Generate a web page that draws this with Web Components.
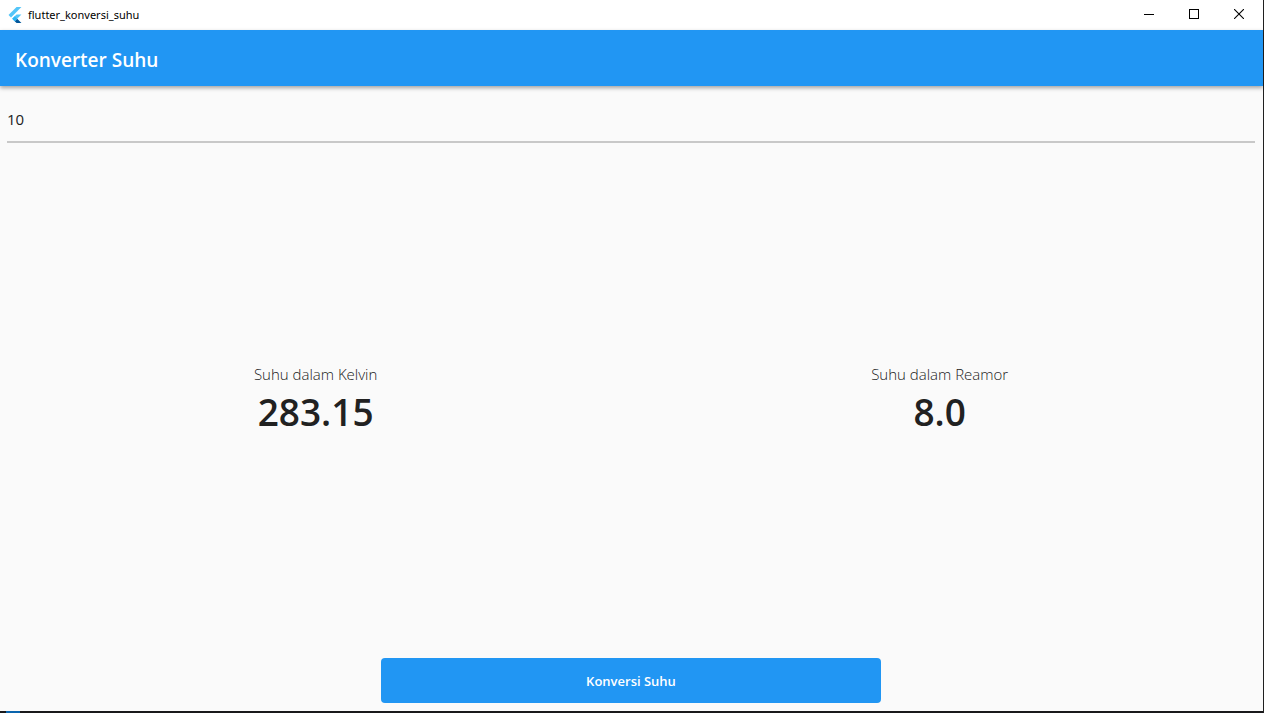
<!DOCTYPE html>
<html lang="id">
<head>
<meta charset="utf-8">
<meta name="viewport" content="width=device-width, initial-scale=1">
<title>flutter_konversi_suhu</title>
<style>
html, body { height: 100%; margin: 0; }
body { background: #202020; font-family: "Open Sans", "Noto Sans", sans-serif; color: #212121; }
</style>
</head>
<body>
<app-window>
  <title-bar slot="title">flutter_konversi_suhu</title-bar>
  <app-bar slot="bar">Konverter Suhu</app-bar>
  <temperature-converter></temperature-converter>
</app-window>

<template id="app-window">
  <style>
    :host { display: flex; flex-direction: column; box-sizing: border-box; min-height: 100vh; border-right: 1px solid #202020; background: #fafafa; }
    ::slotted(temperature-converter) { flex: 1; }
    .taskbar { display: flex; height: 2px; background: #19191b; }
    .start { width: 14px; margin-left: 6px; background: #0a64ad; }
  </style>
  <slot name="title"></slot>
  <slot name="bar"></slot>
  <slot></slot>
  <div class="taskbar"><span class="start"></span></div>
</template>

<template id="title-bar">
  <style>
    :host { display: flex; align-items: center; height: 30px; background: #fff; color: #000; font-size: 11px; line-height: 16px; }
    .logo { width: 16px; height: 16px; margin: 0 5px 0 7px; }
    .name { flex: 1; font-family: "Noto Sans", sans-serif; }
    button { display: grid; place-items: center; width: 45px; height: 28px; padding: 0; border: 0; background: none; }
    .controls { display: flex; height: 28px; padding-right: 2px; align-self: flex-start; }
  </style>
  <svg class="logo" viewBox="0 0 24 24" aria-hidden="true">
    <path fill="#54c5f8" d="M14.314 0 2.300 12 6 15.700 21.684 0z"/>
    <path fill="#54c5f8" d="M14.328 11.072 7.857 17.530l3.690 3.690L21.700 11.072z"/>
    <path fill="#01579b" d="M11.547 21.220 14.327 24H21.700l-6.460-6.468z"/>
    <path fill="#29b6f6" d="M7.857 17.530l3.690-3.690 3.693 3.692-3.693 3.688z"/>
  </svg>
  <span class="name"><slot></slot></span>
  <div class="controls">
    <button aria-label="Minimize"><svg width="10" height="10" shape-rendering="crispEdges"><path fill="#000" d="M0 5h10v1H0z"/></svg></button>
    <button aria-label="Maximize"><svg width="10" height="10" shape-rendering="crispEdges"><path fill="none" stroke="#000" d="M.5 .5h9v9h-9z"/></svg></button>
    <button aria-label="Close"><svg width="10" height="10"><path fill="none" stroke="#000" stroke-width="1.100" d="M0 0l10 10M10 0L0 10"/></svg></button>
  </div>
</template>

<template id="app-bar">
  <style>
    :host { display: flex; align-items: center; height: 56px; padding: 0 15px; background: #2196f3; color: #fff; box-shadow: 0 2px 4px rgba(0,0,0,.35); }
    h1 { margin: 4px 0 0; font-size: 19px; line-height: 26px; font-weight: 600; }
  </style>
  <h1><slot></slot></h1>
</template>

<template id="temperature-reading">
  <style>
    :host { display: flex; flex-direction: column; align-items: center; }
    .label { font-size: 15px; line-height: 22px; font-weight: 300; }
    output { font-size: 37px; line-height: 54px; font-weight: 600; }
  </style>
  <span class="label"><slot></slot></span>
  <output></output>
</template>

<template id="temperature-converter">
  <style>
    :host { display: flex; }
    form { display: flex; flex: 1; flex-direction: column; padding: 8px 8px 8px 7px; }
    input { box-sizing: border-box; width: 100%; height: 49px; padding: 2px 0 0; border: 0; border-bottom: 2px solid #c8c8c8; border-radius: 0; outline: 0; background: none; color: #212121; font: 15px/22px "Open Sans", "Noto Sans", sans-serif; }
    .readings { display: flex; flex: 1; align-items: center; justify-content: space-around; }
    button { align-self: center; width: 500px; max-width: 100%; height: 45px; border: 0; border-radius: 4px; background: #2196f3; color: #fff; font: 600 13px/20px "Open Sans", "Noto Sans", sans-serif; }
  </style>
  <form>
    <input type="text" inputmode="decimal" value="10" aria-label="Suhu dalam Celcius">
    <div class="readings">
      <temperature-reading id="kelvin" value="283.15">Suhu dalam Kelvin</temperature-reading>
      <temperature-reading id="reamor" value="8.0">Suhu dalam Reamor</temperature-reading>
    </div>
    <button type="submit">Konversi Suhu</button>
  </form>
</template>

<script>
class TemplateElement extends HTMLElement {
  constructor() {
    super();
    const template = document.getElementById(this.localName);
    this.attachShadow({ mode: "open" }).append(document.importNode(template.content, true));
  }
}
class AppWindow extends TemplateElement {}
class TitleBar extends TemplateElement {}
class AppBar extends TemplateElement {}
class TemperatureReading extends TemplateElement {
  static observedAttributes = ["value"];
  attributeChangedCallback(name, previous, value) {
    this.shadowRoot.querySelector("output").textContent = value;
  }
}
class TemperatureConverter extends TemplateElement {
  connectedCallback() {
    const root = this.shadowRoot;
    root.querySelector("form").addEventListener("submit", event => {
      event.preventDefault();
      const celsius = Number(root.querySelector("input").value);
      if (Number.isNaN(celsius)) return;
      root.getElementById("kelvin").setAttribute("value", (celsius + 273.15).toFixed(2));
      root.getElementById("reamor").setAttribute("value", (celsius * 0.8).toFixed(1));
    });
  }
}
customElements.define("app-window", AppWindow);
customElements.define("title-bar", TitleBar);
customElements.define("app-bar", AppBar);
customElements.define("temperature-reading", TemperatureReading);
customElements.define("temperature-converter", TemperatureConverter);
</script>
</body>
</html>
